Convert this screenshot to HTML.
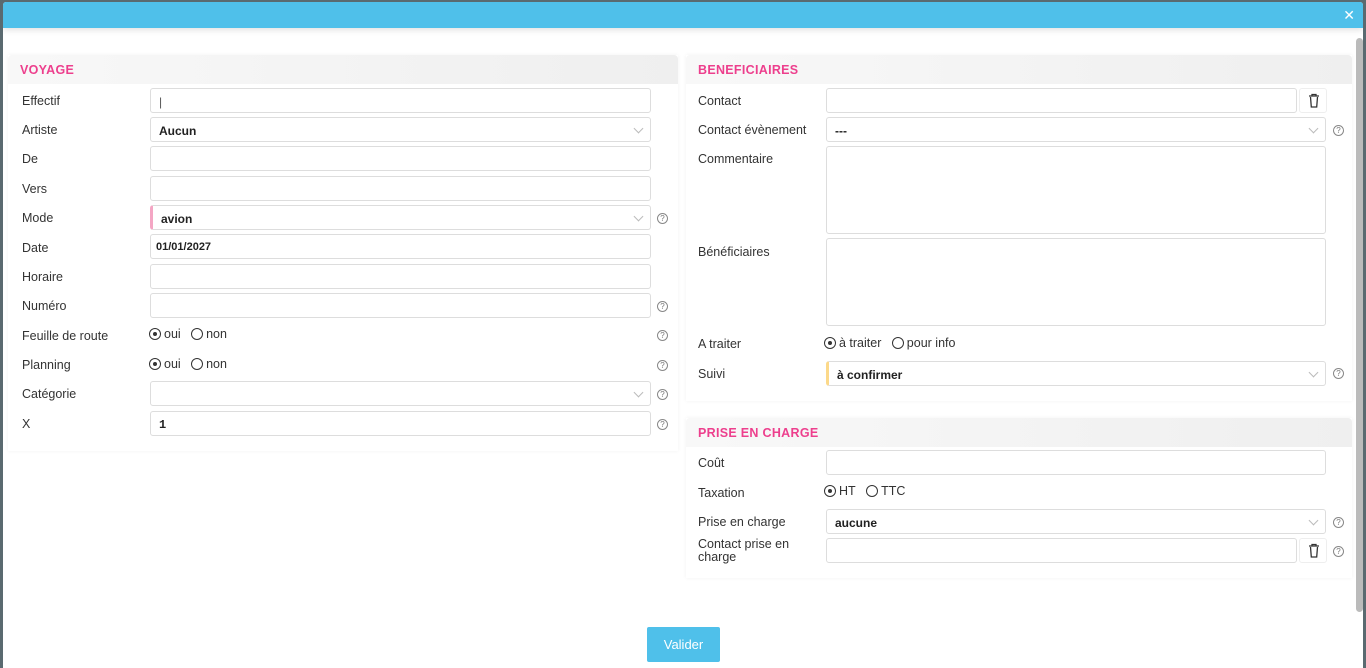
<!DOCTYPE html>
<html><head><meta charset="utf-8"><style>
*{box-sizing:border-box;margin:0;padding:0}
body{width:1366px;height:668px;overflow:hidden;background:#5a6a70;font-family:"Liberation Sans","DejaVu Sans",sans-serif;color:#333;position:relative}
.modal{position:absolute;left:3px;top:2px;width:1360px;height:666px;background:#fff;border-radius:3px 3px 0 0;overflow:hidden}
.hdr{position:absolute;left:0;top:0;width:1360px;height:26px;background:#4fc0ea;box-shadow:0 2px 6px rgba(0,0,0,.12)}
.x{position:absolute;right:8px;top:5px;color:#fff;font-size:14px}
.abs{position:absolute}
.panel{position:absolute;background:#fff;box-shadow:0 0 4px rgba(0,0,0,.06)}
.ph{position:absolute;left:0;top:0;right:0;height:29px;background:linear-gradient(90deg,#f8f8f8,#efefef);border-radius:4px 4px 0 0}
.ph span{position:absolute;left:12px;top:8px;font-weight:bold;font-size:12.5px;color:#ed3f8d;letter-spacing:.3px}
.lbl{position:absolute;font-size:12.5px;color:#333}
.in{position:absolute;height:25px;border:1px solid #ddd;border-radius:3px;background:#fff;font-size:12px;font-weight:bold;padding:6px 8px;color:#222}
.chev{position:absolute;right:8px;top:7px;width:7px;height:7px;border-right:1px solid #bbb;border-bottom:1px solid #bbb;transform:rotate(45deg)}
.q{position:absolute;width:11px;height:11px;border:1px solid #888;border-radius:50%;font-size:8px;line-height:9px;text-align:center;color:#777}
.r{position:absolute;font-size:12.5px}
.r i{display:inline-block;width:12px;height:12px;border:1.3px solid #333;border-radius:50%;vertical-align:-2px;margin-right:3px;position:relative}
.r i.on:after{content:"";position:absolute;left:2.5px;top:2.5px;width:4.5px;height:4.5px;background:#333;border-radius:50%}
.trash{position:absolute;width:28px;height:25px;border:1px solid #eee;border-radius:3px}
.btn{position:absolute;left:644px;top:625px;width:73px;height:35px;background:#4fc0ea;color:#fff;font-size:13px;text-align:center;line-height:35px;border-radius:2px}
.sb{position:absolute;left:1353px;top:36px;width:7px;height:574px;background:#bbb;border-radius:4px}
</style></head><body>
<div class="modal">
<div class="hdr"><span class="x">✕</span></div>
<div class="sb"></div>

<div class="panel" style="left:5px;top:53px;width:670px;height:396px"><div class="ph"><span>VOYAGE</span></div></div>
<div class="panel" style="left:683px;top:53px;width:666px;height:346px"><div class="ph"><span>BENEFICIAIRES</span></div></div>
<div class="panel" style="left:683px;top:416px;width:666px;height:160px"><div class="ph"><span>PRISE EN CHARGE</span></div></div>

<!-- left rows -->
<div class="lbl" style="left:19px;top:92px">Effectif</div><div class="in" style="left:147px;top:86px;width:501px"><span style="font-weight:normal;color:#555">|</span></div>
<div class="lbl" style="left:19px;top:121px">Artiste</div><div class="in" style="left:147px;top:115px;width:501px">Aucun<div class="chev"></div></div>
<div class="lbl" style="left:19px;top:150px">De</div><div class="in" style="left:147px;top:144px;width:501px"></div>
<div class="lbl" style="left:19px;top:180px">Vers</div><div class="in" style="left:147px;top:174px;width:501px"></div>
<div class="lbl" style="left:19px;top:209px">Mode</div><div class="in" style="left:147px;top:203px;width:501px;border-left:3px solid #f4a6c4">avion<div class="chev"></div></div><div class="q" style="left:654px;top:211px">?</div>
<div class="lbl" style="left:19px;top:239px">Date</div><div class="in" style="left:147px;top:232px;width:501px;font-size:11px;padding-left:5px">01/01/2027</div>
<div class="lbl" style="left:19px;top:268px">Horaire</div><div class="in" style="left:147px;top:262px;width:501px"></div>
<div class="lbl" style="left:19px;top:297px">Numéro</div><div class="in" style="left:147px;top:291px;width:501px"></div><div class="q" style="left:654px;top:299px">?</div>
<div class="lbl" style="left:19px;top:327px">Feuille de route</div><div class="r" style="left:146px;top:325px"><i class="on"></i>oui&nbsp;&nbsp;&nbsp;<i></i>non</div><div class="q" style="left:654px;top:328px">?</div>
<div class="lbl" style="left:19px;top:356px">Planning</div><div class="r" style="left:146px;top:355px"><i class="on"></i>oui&nbsp;&nbsp;&nbsp;<i></i>non</div><div class="q" style="left:654px;top:358px">?</div>
<div class="lbl" style="left:19px;top:385px">Catégorie</div><div class="in" style="left:147px;top:379px;width:501px"><div class="chev"></div></div><div class="q" style="left:654px;top:387px">?</div>
<div class="lbl" style="left:19px;top:415px">X</div><div class="in" style="left:147px;top:409px;width:501px;font-family:'Liberation Mono',monospace">1</div><div class="q" style="left:654px;top:417px">?</div>

<!-- right -->
<div class="lbl" style="left:695px;top:92px">Contact</div><div class="in" style="left:823px;top:86px;width:471px"></div>
<div class="trash" style="left:1296px;top:86px"><svg width="28" height="25"><path d="M9 7h10M12 7V5.5h4V7M10.5 8l.8 10h5.4l.8-10" fill="none" stroke="#333" stroke-width="1.3"/></svg></div>
<div class="lbl" style="left:695px;top:121px">Contact évènement</div><div class="in" style="left:823px;top:115px;width:500px">---<div class="chev"></div></div><div class="q" style="left:1330px;top:123px">?</div>
<div class="lbl" style="left:695px;top:150px">Commentaire</div><div class="in" style="left:823px;top:144px;width:500px;height:88px"></div>
<div class="lbl" style="left:695px;top:243px">Bénéficiaires</div><div class="in" style="left:823px;top:236px;width:500px;height:88px"></div>
<div class="lbl" style="left:695px;top:335px">A traiter</div><div class="r" style="left:821px;top:334px"><i class="on"></i>à traiter&nbsp;&nbsp;&nbsp;<i></i>pour info</div>
<div class="lbl" style="left:695px;top:365px">Suivi</div><div class="in" style="left:823px;top:359px;width:500px;border-left:3px solid #fcd98a">à confirmer<div class="chev"></div></div><div class="q" style="left:1330px;top:366px">?</div>

<div class="lbl" style="left:695px;top:454px">Coût</div><div class="in" style="left:823px;top:448px;width:500px"></div>
<div class="lbl" style="left:695px;top:484px">Taxation</div><div class="r" style="left:821px;top:482px"><i class="on"></i>HT&nbsp;&nbsp;&nbsp;<i></i>TTC</div>
<div class="lbl" style="left:695px;top:513px">Prise en charge</div><div class="in" style="left:823px;top:507px;width:500px">aucune<div class="chev"></div></div><div class="q" style="left:1330px;top:515px">?</div>
<div class="lbl" style="left:695px;top:536px;line-height:13px">Contact prise en<br>charge</div><div class="in" style="left:823px;top:536px;width:471px"></div>
<div class="trash" style="left:1296px;top:536px"><svg width="28" height="25"><path d="M9 7h10M12 7V5.5h4V7M10.5 8l.8 10h5.4l.8-10" fill="none" stroke="#333" stroke-width="1.3"/></svg></div>
<div class="q" style="left:1330px;top:544px">?</div>

<div class="btn">Valider</div>
</div>
</body></html>
